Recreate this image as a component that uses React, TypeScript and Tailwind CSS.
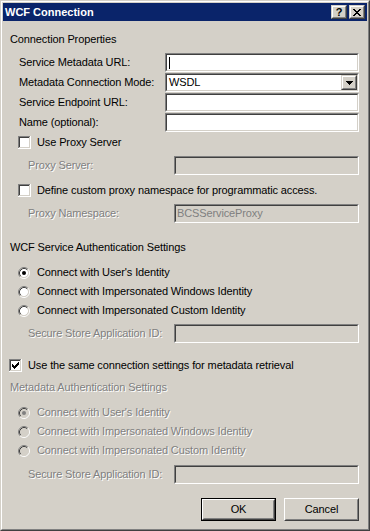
import React from "react";

const FONT = "[font-family:'Liberation_Sans',Arial,sans-serif]";
const DIS = "text-[#808080] [text-shadow:1px_1px_0_#ffffff]";

function Sunken({ className = "", bg = "bg-white", children }: { className?: string; bg?: string; children?: React.ReactNode }) {
  return (
    <div className={`border border-t-[#808080] border-l-[#808080] border-b-white border-r-white ${className}`}>
      <div className={`h-full w-full border border-t-[#404040] border-l-[#404040] border-b-[#d4d0c8] border-r-[#d4d0c8] ${bg} relative flex items-center`}>
        {children}
      </div>
    </div>
  );
}

function Raised({ className = "", children }: { className?: string; children?: React.ReactNode }) {
  return (
    <div className={`border border-t-[#d4d0c8] border-l-[#d4d0c8] border-b-[#404040] border-r-[#404040] bg-[#d4d0c8] ${className}`}>
      <div className="h-full w-full border border-t-white border-l-white border-b-[#808080] border-r-[#808080] flex items-center justify-center">
        {children}
      </div>
    </div>
  );
}

function Checkbox({ checked = false }: { checked?: boolean }) {
  const cols: [number, number][] = [
    [0, 2], [1, 3], [2, 4], [3, 3], [4, 2], [5, 1], [6, 0],
  ];
  return (
    <svg width="13" height="13" viewBox="0 0 13 13" className="shrink-0" shapeRendering="crispEdges">
      <rect x="0" y="0" width="13" height="13" fill="#ffffff" />
      <rect x="0" y="0" width="12" height="1" fill="#808080" />
      <rect x="0" y="0" width="1" height="12" fill="#808080" />
      <rect x="1" y="1" width="10" height="1" fill="#404040" />
      <rect x="1" y="1" width="1" height="10" fill="#404040" />
      <rect x="1" y="11" width="11" height="1" fill="#d4d0c8" />
      <rect x="11" y="1" width="1" height="11" fill="#d4d0c8" />
      {checked &&
        cols.map(([c, r]) => <rect key={c} x={3 + c} y={3 + r} width="1" height="3" fill="#000000" />)}
    </svg>
  );
}

function Radio({ selected = false, disabled = false }: { selected?: boolean; disabled?: boolean }) {
  return (
    <svg width="12" height="12" viewBox="0 0 12 12" className="shrink-0">
      <circle cx="6" cy="6" r="4.2" fill={disabled ? "#d4d0c8" : "#ffffff"} />
      <path d="M2.11 9.89 A5.5 5.5 0 0 1 9.89 2.11" stroke="#808080" strokeWidth="1" fill="none" />
      <path d="M9.89 2.11 A5.5 5.5 0 0 1 2.11 9.89" stroke="#ffffff" strokeWidth="1" fill="none" />
      <path d="M2.82 9.18 A4.5 4.5 0 0 1 9.18 2.82" stroke="#404040" strokeWidth="1" fill="none" />
      <path d="M9.18 2.82 A4.5 4.5 0 0 1 2.82 9.18" stroke="#d4d0c8" strokeWidth="1" fill="none" />
      {selected && <circle cx="6" cy="6" r="2" fill={disabled ? "#808080" : "#000000"} />}
    </svg>
  );
}

function LabelInput({ label, children }: { label: string; children: React.ReactNode }) {
  return (
    <div className="flex items-center h-[19px] pl-[16px] pr-[8px] mt-[1px]">
      <div className="w-[146px] shrink-0 leading-none">{label}</div>
      <div className="flex-1 h-full">{children}</div>
    </div>
  );
}

function DisabledRow({ label, value, className = "" }: { label: string; value?: string; className?: string }) {
  return (
    <div className={`flex items-center h-[19px] pl-[25px] pr-[8px] ${className}`}>
      <div className={`w-[146px] shrink-0 leading-none ${DIS}`}>{label}</div>
      <Sunken className="flex-1 h-full" bg="bg-[#d4d0c8]">
        {value && <span className="pl-[1px] leading-none text-[#808080]">{value}</span>}
      </Sunken>
    </div>
  );
}

function RadioRow({ label, selected = false, disabled = false, className = "" }: { label: string; selected?: boolean; disabled?: boolean; className?: string }) {
  return (
    <div className={`flex items-center h-[19px] pl-[15px] ${className}`}>
      <Radio selected={selected} disabled={disabled} />
      <span className={`ml-[7px] leading-none ${disabled ? DIS : ""}`}>{label}</span>
    </div>
  );
}

export default function App() {
  return (
    <div className={`w-[370px] h-[531px] text-[11px] tracking-[-0.12px] text-black ${FONT} border border-t-[#d4d0c8] border-l-[#d4d0c8] border-b-[#404040] border-r-[#404040] bg-[#d4d0c8]`}>
      <div className="w-full h-full border border-t-white border-l-white border-b-[#808080] border-r-[#808080] p-[1px] flex flex-col">
        {/* Title bar */}
        <div className="h-[18px] bg-[#0a246a] flex items-center pl-[2px] pr-[2px] shrink-0">
          <span className="text-white font-bold leading-none flex-1 tracking-normal">WCF Connection</span>
          <Raised className="w-[16px] h-[14px]">
            <span className="font-bold text-[11px] leading-none text-black">?</span>
          </Raised>
          <Raised className="w-[16px] h-[14px] ml-[2px]">
            <svg width="8" height="7" viewBox="0 0 8 7" shapeRendering="crispEdges">
              <path d="M0 0h2v1h-2z M6 0h2v1h-2z M1 1h2v1h-2z M5 1h2v1h-2z M2 2h4v1h-4z M3 3h2v1h-2z M2 4h4v1h-4z M1 5h2v1h-2z M5 5h2v1h-2z M0 6h2v1h-2z M6 6h2v1h-2z" fill="#000000" />
            </svg>
          </Raised>
        </div>

        {/* Body */}
        <div className="flex flex-col">
          <div className="h-[16px] mt-[10px] pl-[7px] flex items-center leading-none">Connection Properties</div>

          <div className="mt-[5px]" />
          <LabelInput label="Service Metadata URL:">
            <Sunken className="h-full">
              <div className="absolute left-[2px] top-[2px] w-[1px] h-[12px] bg-black" />
            </Sunken>
          </LabelInput>
          <LabelInput label="Metadata Connection Mode:">
            <Sunken className="h-full">
              <span className="pl-[2px] leading-none flex-1">WSDL</span>
              <Raised className="w-[16px] h-full">
                <svg width="7" height="4" viewBox="0 0 7 4" shapeRendering="crispEdges">
                  <path d="M0 0h7v1h-7z M1 1h5v1h-5z M2 2h3v1h-3z M3 3h1v1h-1z" fill="#000000" />
                </svg>
              </Raised>
            </Sunken>
          </LabelInput>
          <LabelInput label="Service Endpoint URL:">
            <Sunken className="h-full" />
          </LabelInput>
          <LabelInput label="Name (optional):">
            <Sunken className="h-full" />
          </LabelInput>

          <div className="flex items-center h-[16px] mt-[2px] pl-[15px]">
            <Checkbox />
            <span className="ml-[6px] leading-none">Use Proxy Server</span>
          </div>
          <DisabledRow label="Proxy Server:" className="mt-[6px]" />
          <div className="flex items-center h-[16px] mt-[7px] pl-[15px]">
            <Checkbox />
            <span className="ml-[6px] leading-none">Define custom proxy namespace for programmatic access.</span>
          </div>
          <DisabledRow label="Proxy Namespace:" value="BCSServiceProxy" className="mt-[6px]" />

          <div className="h-[16px] mt-[16px] pl-[7px] flex items-center leading-none">WCF Service Authentication Settings</div>
          <RadioRow label="Connect with User's Identity" selected className="mt-[8px]" />
          <RadioRow label="Connect with Impersonated Windows Identity" />
          <RadioRow label="Connect with Impersonated Custom Identity" />
          <DisabledRow label="Secure Store Application ID:" className="mt-[4px]" />

          <div className="flex items-center h-[16px] mt-[14px] pl-[6px]">
            <Checkbox checked />
            <span className="ml-[6px] leading-none">Use the same connection settings for metadata retrieval</span>
          </div>
          <div className={`h-[16px] mt-[6px] pl-[7px] flex items-center leading-none ${DIS}`}>Metadata Authentication Settings</div>
          <RadioRow label="Connect with User's Identity" selected disabled className="mt-[8px]" />
          <RadioRow label="Connect with Impersonated Windows Identity" disabled />
          <RadioRow label="Connect with Impersonated Custom Identity" disabled />
          <DisabledRow label="Secure Store Application ID:" className="mt-[5px]" />

          <div className="flex justify-end items-center mt-[14px] pr-[8px] gap-[8px]">
            <div className="w-[75px] h-[23px] border border-black">
              <div className="w-full h-full border border-t-white border-l-white border-b-[#404040] border-r-[#404040]">
                <div className="w-full h-full border border-t-[#d4d0c8] border-l-[#d4d0c8] border-b-[#808080] border-r-[#808080] flex items-center justify-center leading-none">
                  OK
                </div>
              </div>
            </div>
            <div className="w-[75px] h-[23px] border border-t-white border-l-white border-b-[#404040] border-r-[#404040]">
              <div className="w-full h-full border border-t-[#d4d0c8] border-l-[#d4d0c8] border-b-[#808080] border-r-[#808080] flex items-center justify-center leading-none">
                Cancel
              </div>
            </div>
          </div>
        </div>
      </div>
    </div>
  );
}
